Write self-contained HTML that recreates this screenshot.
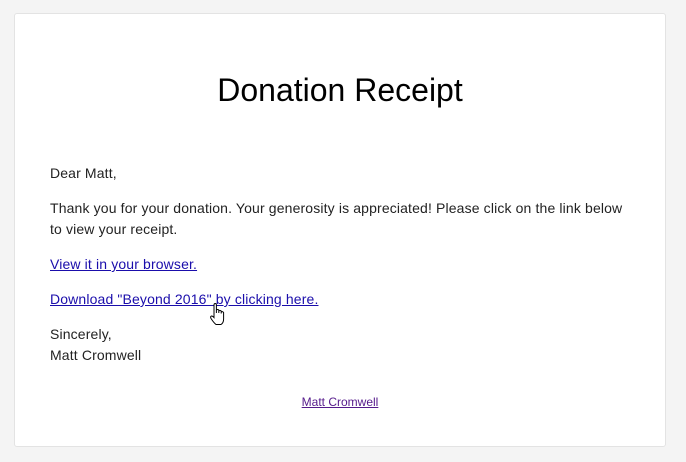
<!DOCTYPE html>
<html><head><style>
body{margin:0;background:#f4f4f4;font-family:"Liberation Sans",Arial,sans-serif;width:686px;height:462px;overflow:hidden}
.card{position:absolute;left:14px;top:13px;width:650px;height:432px;background:#fff;border:1px solid #e3e3e3;border-radius:3px}
h1{position:absolute;left:0;width:100%;top:56px;margin:0;text-align:center;font-weight:normal;font-size:32px;color:#000;line-height:40px}
.t{position:absolute;left:35px;font-size:14px;color:#222;line-height:21px;white-space:nowrap;letter-spacing:0.14px}
a{color:#1a0dab;text-decoration:underline}
.f{position:absolute;left:0;width:100%;top:381px;text-align:center;font-size:12px}
.f a{color:#551a8b}
</style></head><body>
<div class="card">
<h1>Donation Receipt</h1>
<div class="t" style="top:149px">Dear Matt,</div>
<div class="t" style="top:184px">Thank you for your donation. Your generosity is appreciated! Please click on the link below<br>to view your receipt.</div>
<div class="t" style="top:240px"><a>View it in your browser.</a></div>
<div class="t" style="top:275px"><a>Download "Beyond 2016" by clicking here.</a></div>
<div class="t" style="top:310px">Sincerely,<br>Matt Cromwell</div>
<div class="f"><a>Matt Cromwell</a></div>
</div>
<svg style="position:absolute;left:209px;top:303px" width="20" height="26" viewBox="0 0 20 26"><path d="M5 2 Q5 0.5 6.2 0.5 Q7.4 0.5 7.4 2 L7.4 10 L7.4 7 Q8.6 6 9.8 7 L9.8 10 L9.8 8 Q11 7 12.2 8 L12.2 10.5 L12.2 9 Q13.4 8 14.6 9.5 L14.6 16 Q14.6 20 12 21.5 L7 21.5 Q5 20 2 15.5 Q1 13.5 2.5 13 Q3.5 12.8 5 14.5 Z" fill="#fff" stroke="#000" stroke-width="1"/></svg>
</body></html>
